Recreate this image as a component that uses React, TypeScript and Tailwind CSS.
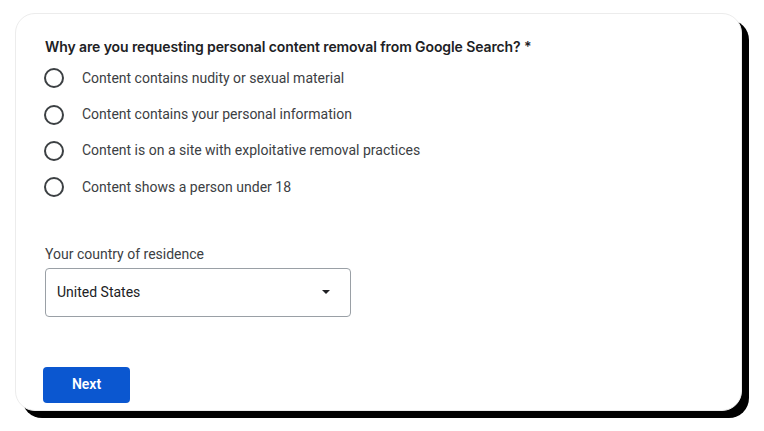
import { useState } from "react";

const reasons = [
  "Content contains nudity or sexual material",
  "Content contains your personal information",
  "Content is on a site with exploitative removal practices",
  "Content shows a person under 18",
];

const App = () => {
  const [selected, setSelected] = useState<number | null>(null);

  return (
    <div className="w-[764px] h-[431px] bg-white font-['Roboto',sans-serif] pt-[13px] pl-[15px]">
      <section className="w-[727px] h-[398px] bg-white border border-[#ececec] rounded-[20px] shadow-[7px_7px_0_0_#000] pl-[29px] pt-[23px]">
        <h1 className="text-[14px] leading-[20px] font-semibold tracking-[-0.1px] text-[#202124] font-['Inter',sans-serif]">
          Why are you requesting personal content removal from Google Search? *
        </h1>

        <div className="mt-[3px] flex flex-col">
          {reasons.map((reason, i) => (
            <label
              key={i}
              className="flex items-center h-[36.4px] cursor-pointer"
              onClick={() => setSelected(i)}
            >
              <span className="w-[20px] h-[20px] -ml-[1px] rounded-full border-2 border-[#3c4043] flex items-center justify-center">
                {selected === i && (
                  <span className="w-[10px] h-[10px] rounded-full bg-[#0b57d0]" />
                )}
              </span>
              <span className="ml-[18px] text-[14px] text-[#3c4043]">{reason}</span>
            </label>
          ))}
        </div>

        <p className="mt-[38px] text-[14px] leading-[20px] text-[#3c4043]">
          Your country of residence
        </p>
        <div className="mt-[4px] w-[306px] h-[49px] border border-[#9aa0a6] rounded-[4px] flex items-center justify-between pl-[11px] pr-[20px]">
          <span className="text-[14px] text-[#202124]">United States</span>
          <svg width="8" height="4" viewBox="0 0 8 4">
            <path d="M0 0 L8 0 L4 4 Z" fill="#202124" />
          </svg>
        </div>

        <button className="mt-[50px] -ml-[2px] w-[87px] h-[36px] rounded-[4px] bg-[#0b57d0] text-white text-[14px] font-semibold">
          Next
        </button>
      </section>
    </div>
  );
};

export default App;
